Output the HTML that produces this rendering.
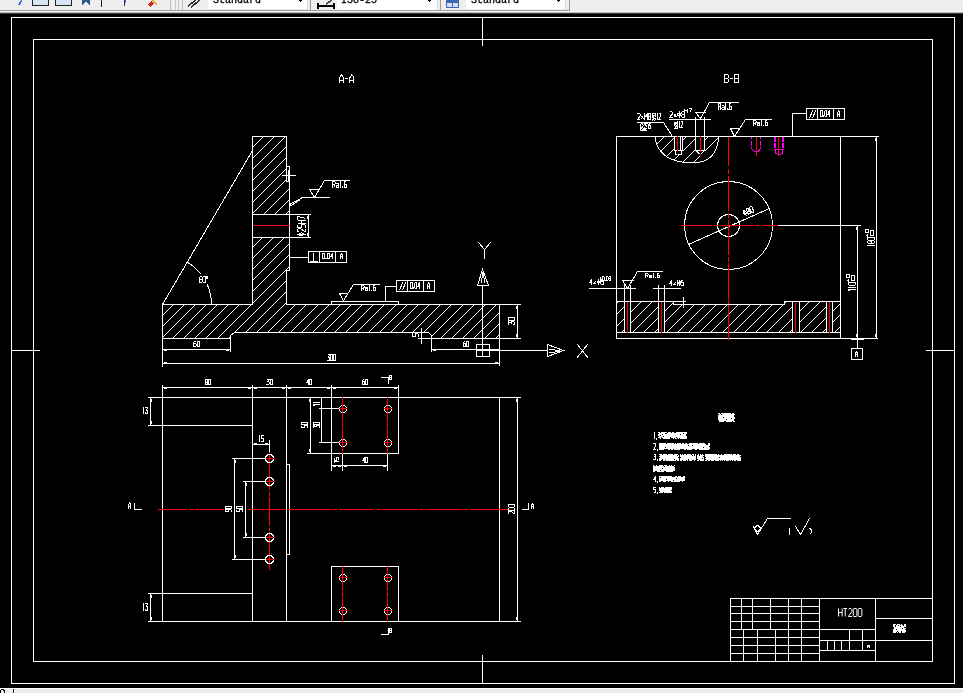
<!DOCTYPE html>
<html><head><meta charset="utf-8"><style>
html,body{margin:0;padding:0;background:#000;overflow:hidden;width:963px;height:693px}
svg{display:block} text{will-change:transform} path,circle{shape-rendering:crispEdges}
</style></head><body>
<svg width="963" height="693" viewBox="0 0 963 693">
<defs><clipPath id="h1"><path d="M252 136 L286 136 L286 181 L289 181 L289 270 L286 270 L286 304 L499 304 L499 338 L431 338 L431 335 L428 332 L234 332 L230 335 L230 338 L162 338 L162 304 L252 304 Z M252 214 L289 214 L289 237 L252 237 Z" clip-rule="evenodd"/></clipPath><clipPath id="h2"><path d="M616 301 L673 301 L673 304 L784 304 L784 301 L840 301 L840 332 L616 332 Z M624 301 L630 301 L630 332 L624 332 Z M658 301 L664 301 L664 332 L658 332 Z M792 301 L799 301 L799 332 L792 332 Z M826 301 L832 301 L832 332 L826 332 Z" clip-rule="evenodd"/></clipPath><clipPath id="bo"><path d="M655 136.5 C656 150 666 160 682 162 L700 162 C712 160 718 150 718.5 136.5 Z M674 136 L683 136 L683 155 L674 155 Z M695 136 L705 136 L705 155 L695 155 Z" clip-rule="evenodd"/></clipPath></defs>
<rect x="0" y="0" width="963" height="11" fill="#eeeeee"/><rect x="0" y="10" width="570" height="1" fill="#9c9c9c"/><rect x="0" y="11" width="963" height="1" fill="#f7f7f7"/><rect x="0" y="12" width="963" height="1" fill="#b4b4b4"/><rect x="0" y="13" width="963" height="1" fill="#3c3c3c"/><path d="M18.50 5.50 L21.50 0.50" fill="none" stroke="#2a6fd6" stroke-width="1.4" /><rect x="32" y="0" width="17" height="6" fill="#222"/><rect x="33" y="0" width="15" height="5" fill="#d8e4f2"/><rect x="55" y="0" width="17" height="6" fill="#222"/><rect x="56" y="0" width="15" height="5" fill="#d8e4f2"/><path d="M82 0 L82 5 L86 2 L90 5 L90 0 Z" fill="#2d5a8a" stroke="none" stroke-width="1" /><rect x="101" y="0" width="1" height="7" fill="#222"/><rect x="124" y="0" width="1" height="6" fill="#333"/><rect x="125" y="0" width="1" height="3" fill="#3a7ad8"/><path d="M148 5 L151 1 L154 3 L151 7 Z" fill="#d22" stroke="none" stroke-width="1" /><path d="M152 0 L157 4" fill="none" stroke="#e9a600" stroke-width="1.5" /><rect x="170" y="0" width="1" height="10" fill="#bdbdbd"/><rect x="175" y="0" width="1" height="10" fill="#c8c8c8"/><rect x="178" y="0" width="1" height="10" fill="#c8c8c8"/><rect x="182" y="0" width="1" height="10" fill="#bdbdbd"/><path d="M188 6 L196 0 M191 7 L200 0" fill="none" stroke="#333" stroke-width="1.6" /><rect x="208" y="0" width="100" height="10" fill="#ffffff"/><rect x="307" y="0" width="1" height="10" fill="#d6dbe6"/><rect x="208" y="9" width="100" height="1" fill="#dfe3ea"/><text x="213" y="2.5" font-family="Liberation Mono" font-size="10" fill="#000" stroke="#000" stroke-width="0.3" text-anchor="start" font-weight="normal">Standard</text><path d="M297 -1 L303 -1 L300 2 Z" fill="#000" stroke="none" stroke-width="1" /><rect x="310" y="0" width="1" height="10" fill="#9a9a9a"/><path d="M318 6 L334 6 M318 3 L318 9 M334 3 L334 9" fill="none" stroke="#000" stroke-width="1.3" /><path d="M326 4 L332 0" fill="none" stroke="#444" stroke-width="1.5" /><rect x="337" y="0" width="101" height="10" fill="#ffffff"/><rect x="437" y="0" width="1" height="10" fill="#d6dbe6"/><text x="341" y="2.5" font-family="Liberation Mono" font-size="10" fill="#000" stroke="#000" stroke-width="0.3" text-anchor="start" font-weight="normal">ISO-25</text><path d="M426 -1 L432 -1 L429 2 Z" fill="#000" stroke="none" stroke-width="1" /><rect x="440" y="0" width="1" height="10" fill="#9a9a9a"/><rect x="446" y="0" width="13" height="8" fill="#3b67b0"/><rect x="447" y="3" width="5" height="4" fill="#cfe0f5"/><rect x="453" y="3" width="5" height="4" fill="#cfe0f5"/><rect x="466" y="0" width="100" height="9" fill="#ffffff"/><rect x="565" y="0" width="1" height="10" fill="#d6dbe6"/><rect x="569" y="0" width="1" height="11" fill="#9c9c9c"/><text x="471" y="2.5" font-family="Liberation Mono" font-size="10" fill="#000" stroke="#000" stroke-width="0.3" text-anchor="start" font-weight="normal">Standard</text><path d="M555 -1 L561 -1 L558 2 Z" fill="#000" stroke="none" stroke-width="1" /><rect x="0" y="14" width="963" height="674" fill="#000000"/><rect x="11" y="17" width="944" height="1" fill="#ffffff"/><rect x="11" y="683" width="944" height="1" fill="#ffffff"/><rect x="11" y="17" width="1" height="667" fill="#ffffff"/><rect x="954" y="17" width="1" height="667" fill="#ffffff"/><rect x="33" y="39" width="900" height="1" fill="#ffffff"/><rect x="33" y="661" width="900" height="1" fill="#ffffff"/><rect x="33" y="39" width="1" height="623" fill="#ffffff"/><rect x="932" y="39" width="1" height="623" fill="#ffffff"/><rect x="482" y="17" width="1" height="29" fill="#ffffff"/><rect x="482" y="655" width="1" height="29" fill="#ffffff"/><rect x="11" y="350" width="29" height="1" fill="#ffffff"/><rect x="926" y="350" width="29" height="1" fill="#ffffff"/><rect x="0" y="688" width="963" height="5" fill="#ececec"/><rect x="0" y="688" width="963" height="1" fill="#ffffff"/><g fill="none" stroke="#000" stroke-width="1.0" stroke-linejoin="round"><g style="vector-effect:non-scaling-stroke"><path vector-effect="non-scaling-stroke" transform="translate(0.00 689.80) scale(1.080 0.900)" d="M1 0 L3 0 L4 1 L4 3 L3 4 L1 4 L0 5 L0 7 L1 8 L3 8 L4 7 L4 5 L3 4 L1 4 L0 3 L0 1 Z"/></g></g><rect x="13" y="689" width="1" height="4" fill="#222"/><g fill="none" stroke="#ffffff" stroke-width="1" stroke-linejoin="round" transform="translate(339.5 74.5)"><path vector-effect="non-scaling-stroke" transform="translate(0.00 0) scale(0.966 1.000)" d="M0 8 L0 3 L2 0 L4 3 L4 8 M0 5.5 L4 5.5"/><path vector-effect="non-scaling-stroke" transform="translate(5.22 0) scale(0.966 1.000)" d="M0.3 4 L3.7 4"/><path vector-effect="non-scaling-stroke" transform="translate(10.44 0) scale(0.966 1.000)" d="M0 8 L0 3 L2 0 L4 3 L4 8 M0 5.5 L4 5.5"/></g><path clip-path="url(#h1)" d="M-52.00 340.00 L154.00 134.00 M-41.00 340.00 L165.00 134.00 M-30.00 340.00 L176.00 134.00 M-18.00 340.00 L188.00 134.00 M-7.00 340.00 L199.00 134.00 M4.00 340.00 L210.00 134.00 M15.00 340.00 L221.00 134.00 M26.00 340.00 L232.00 134.00 M37.00 340.00 L243.00 134.00 M48.00 340.00 L254.00 134.00 M60.00 340.00 L266.00 134.00 M71.00 340.00 L277.00 134.00 M82.00 340.00 L288.00 134.00 M93.00 340.00 L299.00 134.00 M104.00 340.00 L310.00 134.00 M115.00 340.00 L321.00 134.00 M126.00 340.00 L332.00 134.00 M138.00 340.00 L344.00 134.00 M149.00 340.00 L355.00 134.00 M160.00 340.00 L366.00 134.00 M171.00 340.00 L377.00 134.00 M182.00 340.00 L388.00 134.00 M193.00 340.00 L399.00 134.00 M204.00 340.00 L410.00 134.00 M216.00 340.00 L422.00 134.00 M227.00 340.00 L433.00 134.00 M238.00 340.00 L444.00 134.00 M249.00 340.00 L455.00 134.00 M260.00 340.00 L466.00 134.00 M271.00 340.00 L477.00 134.00 M283.00 340.00 L489.00 134.00 M294.00 340.00 L500.00 134.00 M305.00 340.00 L511.00 134.00 M316.00 340.00 L522.00 134.00 M327.00 340.00 L533.00 134.00 M338.00 340.00 L544.00 134.00 M349.00 340.00 L555.00 134.00 M361.00 340.00 L567.00 134.00 M372.00 340.00 L578.00 134.00 M383.00 340.00 L589.00 134.00 M394.00 340.00 L600.00 134.00 M405.00 340.00 L611.00 134.00 M416.00 340.00 L622.00 134.00 M428.00 340.00 L634.00 134.00 M439.00 340.00 L645.00 134.00 M450.00 340.00 L656.00 134.00 M461.00 340.00 L667.00 134.00 M472.00 340.00 L678.00 134.00 M483.00 340.00 L689.00 134.00 M494.00 340.00 L700.00 134.00 M506.00 340.00 L712.00 134.00" stroke="#ffffff" stroke-width="1" fill="none"/><rect x="252" y="136" width="1" height="169" fill="#ffffff"/><rect x="252" y="136" width="35" height="1" fill="#ffffff"/><rect x="286" y="136" width="1" height="46" fill="#ffffff"/><rect x="286" y="181" width="4" height="1" fill="#ffffff"/><rect x="289" y="181" width="1" height="90" fill="#ffffff"/><rect x="286" y="270" width="4" height="1" fill="#ffffff"/><rect x="286" y="270" width="1" height="35" fill="#ffffff"/><rect x="162" y="304" width="91" height="1" fill="#ffffff"/><rect x="286" y="304" width="214" height="1" fill="#ffffff"/><rect x="162" y="304" width="1" height="63" fill="#ffffff"/><rect x="499" y="304" width="1" height="62" fill="#ffffff"/><rect x="162" y="338" width="69" height="1" fill="#ffffff"/><rect x="230" y="335" width="1" height="17" fill="#ffffff"/><path d="M230.50 335.50 L234.50 332.50" fill="none" stroke="#ffffff" stroke-width="1" /><rect x="234" y="332" width="195" height="1" fill="#ffffff"/><path d="M428.50 332.50 L431.50 335.50" fill="none" stroke="#ffffff" stroke-width="1" /><rect x="431" y="335" width="1" height="17" fill="#ffffff"/><rect x="418" y="338" width="103" height="1" fill="#ffffff"/><rect x="286" y="166" width="4" height="1" fill="#ffffff"/><rect x="286" y="181" width="4" height="1" fill="#ffffff"/><rect x="286" y="166" width="1" height="16" fill="#ffffff"/><rect x="289" y="166" width="1" height="16" fill="#ffffff"/><rect x="282" y="175" width="14" height="1" fill="#ffffff"/><rect x="288" y="170" width="1" height="12" fill="#ffffff"/><rect x="253" y="215" width="36" height="22" fill="#000"/><rect x="252" y="214" width="59" height="1" fill="#ffffff"/><rect x="252" y="237" width="59" height="1" fill="#ffffff"/><rect x="253" y="225" width="37" height="1" fill="#ff0000"/><rect x="308" y="214" width="1" height="24" fill="#ffffff"/><g fill="none" stroke="#ffffff" stroke-width="1" stroke-linejoin="round" transform="translate(305.5 235.8) rotate(-90) translate(0 -8)"><path vector-effect="non-scaling-stroke" transform="translate(0.00 0) scale(0.754 1.000)" d="M2 -0.5 L2 8.5 M2 2 L3.5 2.5 L4 4 L3.5 5.5 L2 6 L0.5 5.5 L0 4 L0.5 2.5 Z"/><path vector-effect="non-scaling-stroke" transform="translate(4.07 0) scale(0.754 1.000)" d="M0 1 L1 0 L3 0 L4 1 L4 3 L0 8 L4 8"/><path vector-effect="non-scaling-stroke" transform="translate(8.14 0) scale(0.754 1.000)" d="M4 0 L0.3 0 L0 3.6 L3 3.6 L4 4.6 L4 7 L3 8 L0 8"/><path vector-effect="non-scaling-stroke" transform="translate(12.21 0) scale(0.754 1.000)" d="M0 0 L0 8 M4 0 L4 8 M0 4 L4 4"/><path vector-effect="non-scaling-stroke" transform="translate(16.28 0) scale(0.754 1.000)" d="M0 0 L4 0 L1.5 8"/></g><path d="M252.50 150.50 L162.50 304.50" fill="none" stroke="#ffffff" stroke-width="1" /><path d="M186.99 262.06 A49 49 0 0 1 201.11 274.33" fill="none" stroke="#ffffff" stroke-width="1" /><path d="M207.26 284.57 A49 49 0 0 1 211.5 304.5" fill="none" stroke="#ffffff" stroke-width="1" /><g fill="none" stroke="#ffffff" stroke-width="1" stroke-linejoin="round" transform="translate(199.5 276.5)"><path vector-effect="non-scaling-stroke" transform="translate(0.00 0) scale(0.629 0.750)" d="M3.5 0 L1.2 0 L0 1.5 L0 7 L1 8 L3 8 L4 7 L4 4.6 L3 3.6 L0 3.6"/><path vector-effect="non-scaling-stroke" transform="translate(3.40 0) scale(0.629 0.750)" d="M0.6 0 L3.4 0 L4 1 L4 7 L3.4 8 L0.6 8 L0 7 L0 1 Z"/><path vector-effect="non-scaling-stroke" transform="translate(6.29 0) scale(0.629 0.750)" d="M1 0 L3 0 L3 2 L1 2 Z"/></g><path d="M309.50 189.50 L319.50 189.50" fill="none" stroke="#ffffff" stroke-width="1" /><path d="M309.50 189.50 L314.50 197.50 L324.50 180.50 L349.50 180.50" fill="none" stroke="#ffffff" stroke-width="1" /><rect x="302" y="197" width="28" height="1" fill="#ffffff"/><path d="M302.50 197.50 L289.50 204.50" fill="none" stroke="#ffffff" stroke-width="1" /><path d="M300.50 199.50 L289.50 206.50" fill="none" stroke="#ffffff" stroke-width="1" /><g fill="none" stroke="#ffffff" stroke-width="1" stroke-linejoin="round" transform="translate(332.5 181.5)"><path vector-effect="non-scaling-stroke" transform="translate(0.00 0) scale(0.662 0.750)" d="M0 8 L0 0 L3 0 L4 1 L4 3 L3 4 L0 4 M2 4 L4 8"/><path vector-effect="non-scaling-stroke" transform="translate(3.58 0) scale(0.662 0.750)" d="M0.5 3 L3 3 L4 4 L4 8 L1 8 L0 7 L0 6 L1 5 L4 5"/><path vector-effect="non-scaling-stroke" transform="translate(6.62 0) scale(0.662 0.750)" d="M1 1.2 L2 0 L2 8"/><path vector-effect="non-scaling-stroke" transform="translate(8.87 0) scale(0.662 0.750)" d="M1.6 7.2 L2.2 7.2 L2.2 8 L1.6 8 Z"/><path vector-effect="non-scaling-stroke" transform="translate(11.65 0) scale(0.662 0.750)" d="M3.5 0 L1.2 0 L0 1.5 L0 7 L1 8 L3 8 L4 7 L4 4.6 L3 3.6 L0 3.6"/></g><rect x="289" y="257" width="20" height="1" fill="#ffffff"/><rect x="308" y="251" width="39" height="1" fill="#ffffff"/><rect x="308" y="262" width="39" height="1" fill="#ffffff"/><rect x="308" y="251" width="1" height="12" fill="#ffffff"/><rect x="346" y="251" width="1" height="12" fill="#ffffff"/><rect x="319" y="251" width="1" height="12" fill="#ffffff"/><rect x="335" y="251" width="1" height="12" fill="#ffffff"/><rect x="313" y="253" width="1" height="9" fill="#ffffff"/><rect x="310" y="261" width="8" height="1" fill="#ffffff"/><g fill="none" stroke="#ffffff" stroke-width="1" stroke-linejoin="round" transform="translate(322.5 253.5)"><path vector-effect="non-scaling-stroke" transform="translate(0.00 0) scale(0.579 0.625)" d="M0.6 0 L3.4 0 L4 1 L4 7 L3.4 8 L0.6 8 L0 7 L0 1 Z"/><path vector-effect="non-scaling-stroke" transform="translate(2.43 0) scale(0.579 0.625)" d="M1.6 7.2 L2.2 7.2 L2.2 8 L1.6 8 Z"/><path vector-effect="non-scaling-stroke" transform="translate(4.86 0) scale(0.579 0.625)" d="M0.6 0 L3.4 0 L4 1 L4 7 L3.4 8 L0.6 8 L0 7 L0 1 Z"/><path vector-effect="non-scaling-stroke" transform="translate(7.99 0) scale(0.579 0.625)" d="M3 8 L3 0 L0 5.5 L4 5.5"/></g><g fill="none" stroke="#ffffff" stroke-width="1" stroke-linejoin="round" transform="translate(340.5 253.5)"><path vector-effect="non-scaling-stroke" transform="translate(0.00 0) scale(0.575 0.625)" d="M0 8 L0 3 L2 0 L4 3 L4 8 M0 5.5 L4 5.5"/></g><rect x="331" y="301" width="68" height="1" fill="#ffffff"/><rect x="331" y="301" width="1" height="4" fill="#ffffff"/><rect x="398" y="301" width="1" height="4" fill="#ffffff"/><path d="M339.50 293.50 L347.50 293.50" fill="none" stroke="#ffffff" stroke-width="1" /><path d="M339.50 293.50 L343.50 300.50 L353.50 284.50 L379.50 284.50" fill="none" stroke="#ffffff" stroke-width="1" /><g fill="none" stroke="#ffffff" stroke-width="1" stroke-linejoin="round" transform="translate(361.5 285.5)"><path vector-effect="non-scaling-stroke" transform="translate(0.00 0) scale(0.662 0.625)" d="M0 8 L0 0 L3 0 L4 1 L4 3 L3 4 L0 4 M2 4 L4 8"/><path vector-effect="non-scaling-stroke" transform="translate(3.58 0) scale(0.662 0.625)" d="M0.5 3 L3 3 L4 4 L4 8 L1 8 L0 7 L0 6 L1 5 L4 5"/><path vector-effect="non-scaling-stroke" transform="translate(6.62 0) scale(0.662 0.625)" d="M1 1.2 L2 0 L2 8"/><path vector-effect="non-scaling-stroke" transform="translate(8.87 0) scale(0.662 0.625)" d="M1.6 7.2 L2.2 7.2 L2.2 8 L1.6 8 Z"/><path vector-effect="non-scaling-stroke" transform="translate(11.65 0) scale(0.662 0.625)" d="M3.5 0 L1.2 0 L0 1.5 L0 7 L1 8 L3 8 L4 7 L4 4.6 L3 3.6 L0 3.6"/></g><rect x="396" y="280" width="39" height="1" fill="#ffffff"/><rect x="396" y="291" width="39" height="1" fill="#ffffff"/><rect x="396" y="280" width="1" height="12" fill="#ffffff"/><rect x="434" y="280" width="1" height="12" fill="#ffffff"/><rect x="407" y="280" width="1" height="12" fill="#ffffff"/><rect x="423" y="280" width="1" height="12" fill="#ffffff"/><path d="M399.50 290.50 L402.50 282.50" fill="none" stroke="#ffffff" stroke-width="1" /><path d="M402.50 290.50 L405.50 282.50" fill="none" stroke="#ffffff" stroke-width="1" /><g fill="none" stroke="#ffffff" stroke-width="1" stroke-linejoin="round" transform="translate(410.5 282.5)"><path vector-effect="non-scaling-stroke" transform="translate(0.00 0) scale(0.522 0.750)" d="M0.6 0 L3.4 0 L4 1 L4 7 L3.4 8 L0.6 8 L0 7 L0 1 Z"/><path vector-effect="non-scaling-stroke" transform="translate(2.19 0) scale(0.522 0.750)" d="M1.6 7.2 L2.2 7.2 L2.2 8 L1.6 8 Z"/><path vector-effect="non-scaling-stroke" transform="translate(4.39 0) scale(0.522 0.750)" d="M0.6 0 L3.4 0 L4 1 L4 7 L3.4 8 L0.6 8 L0 7 L0 1 Z"/><path vector-effect="non-scaling-stroke" transform="translate(7.21 0) scale(0.522 0.750)" d="M3 8 L3 0 L0 5.5 L4 5.5"/></g><g fill="none" stroke="#ffffff" stroke-width="1" stroke-linejoin="round" transform="translate(427.5 282.5)"><path vector-effect="non-scaling-stroke" transform="translate(0.00 0) scale(0.575 0.750)" d="M0 8 L0 3 L2 0 L4 3 L4 8 M0 5.5 L4 5.5"/></g><rect x="385" y="286" width="12" height="1" fill="#ffffff"/><rect x="385" y="286" width="1" height="15" fill="#ffffff"/><rect x="421" y="328" width="1" height="16" fill="#ffffff"/><g fill="none" stroke="#ffffff" stroke-width="1" stroke-linejoin="round" transform="translate(418.5 336.8) rotate(-90) translate(0 -6)"><path vector-effect="non-scaling-stroke" transform="translate(0.00 0) scale(0.825 0.750)" d="M4 0 L0.3 0 L0 3.6 L3 3.6 L4 4.6 L4 7 L3 8 L0 8"/></g><rect x="162" y="349" width="69" height="1" fill="#ffffff"/><rect x="431" y="349" width="69" height="1" fill="#ffffff"/><rect x="162" y="363" width="338" height="1" fill="#ffffff"/><g fill="none" stroke="#ffffff" stroke-width="1" stroke-linejoin="round" transform="translate(193.5 341.5)"><path vector-effect="non-scaling-stroke" transform="translate(0.00 0) scale(0.670 0.625)" d="M3.5 0 L1.2 0 L0 1.5 L0 7 L1 8 L3 8 L4 7 L4 4.6 L3 3.6 L0 3.6"/><path vector-effect="non-scaling-stroke" transform="translate(3.62 0) scale(0.670 0.625)" d="M0.6 0 L3.4 0 L4 1 L4 7 L3.4 8 L0.6 8 L0 7 L0 1 Z"/></g><g fill="none" stroke="#ffffff" stroke-width="1" stroke-linejoin="round" transform="translate(463.5 341.5)"><path vector-effect="non-scaling-stroke" transform="translate(0.00 0) scale(0.564 0.625)" d="M3.5 0 L1.2 0 L0 1.5 L0 7 L1 8 L3 8 L4 7 L4 4.6 L3 3.6 L0 3.6"/><path vector-effect="non-scaling-stroke" transform="translate(3.04 0) scale(0.564 0.625)" d="M0.6 0 L3.4 0 L4 1 L4 7 L3.4 8 L0.6 8 L0 7 L0 1 Z"/></g><g fill="none" stroke="#ffffff" stroke-width="1" stroke-linejoin="round" transform="translate(327.5 354.5)"><path vector-effect="non-scaling-stroke" transform="translate(0.00 0) scale(0.561 0.750)" d="M0 0 L4 0 L2 3.5 L3 3.5 L4 4.5 L4 7 L3 8 L1 8 L0 7"/><path vector-effect="non-scaling-stroke" transform="translate(3.03 0) scale(0.561 0.750)" d="M0.6 0 L3.4 0 L4 1 L4 7 L3.4 8 L0.6 8 L0 7 L0 1 Z"/><path vector-effect="non-scaling-stroke" transform="translate(6.06 0) scale(0.561 0.750)" d="M0.6 0 L3.4 0 L4 1 L4 7 L3.4 8 L0.6 8 L0 7 L0 1 Z"/></g><rect x="517" y="304" width="1" height="35" fill="#ffffff"/><rect x="499" y="304" width="22" height="1" fill="#ffffff"/><g fill="none" stroke="#ffffff" stroke-width="1" stroke-linejoin="round" transform="translate(514.5 324.8) rotate(-90) translate(0 -6)"><path vector-effect="non-scaling-stroke" transform="translate(0.00 0) scale(0.777 0.750)" d="M0 0 L4 0 L2 3.5 L3 3.5 L4 4.5 L4 7 L3 8 L1 8 L0 7"/><path vector-effect="non-scaling-stroke" transform="translate(4.19 0) scale(0.777 0.750)" d="M0.6 0 L3.4 0 L4 1 L4 7 L3.4 8 L0.6 8 L0 7 L0 1 Z"/></g><rect x="482" y="285" width="1" height="66" fill="#ffffff"/><path d="M477.5 285.5 L482.5 269.5 L488.5 285.5 Z" fill="none" stroke="#ffffff" stroke-width="1" /><path d="M481.50 283.50 L482.50 272.50" fill="none" stroke="#ffffff" stroke-width="1" /><path d="M484.50 283.50 L483.50 272.50" fill="none" stroke="#ffffff" stroke-width="1" /><path d="M478.50 242.50 L484.50 249.50" fill="none" stroke="#ffffff" stroke-width="1" /><path d="M490.50 242.50 L484.50 249.50" fill="none" stroke="#ffffff" stroke-width="1" /><rect x="484" y="249" width="1" height="10" fill="#ffffff"/><rect x="482" y="350" width="66" height="1" fill="#ffffff"/><path d="M547.5 344.5 L563.5 350.5 L547.5 356.5 Z" fill="none" stroke="#ffffff" stroke-width="1" /><path d="M549.50 349.50 L560.50 350.50" fill="none" stroke="#ffffff" stroke-width="1" /><path d="M549.50 352.50 L560.50 351.50" fill="none" stroke="#ffffff" stroke-width="1" /><path d="M577.50 344.50 L588.50 358.50" fill="none" stroke="#ffffff" stroke-width="1" /><path d="M587.50 344.50 L576.50 358.50" fill="none" stroke="#ffffff" stroke-width="1" /><rect x="476" y="344" width="14" height="1" fill="#ffffff"/><rect x="476" y="356" width="14" height="1" fill="#ffffff"/><rect x="476" y="344" width="1" height="13" fill="#ffffff"/><rect x="489" y="344" width="1" height="13" fill="#ffffff"/><rect x="482" y="344" width="1" height="13" fill="#ffffff"/><rect x="476" y="350" width="14" height="1" fill="#ffffff"/><g fill="none" stroke="#ffffff" stroke-width="1" stroke-linejoin="round" transform="translate(724.5 74.5)"><path vector-effect="non-scaling-stroke" transform="translate(0.00 0) scale(0.966 1.000)" d="M-0.6 8 L3.2 8 L4 7 L4 5.2 L3.2 4.2 L4 3.2 L4 1 L3.2 0 L0 0 L0 8 M0 4.2 L3.2 4.2"/><path vector-effect="non-scaling-stroke" transform="translate(5.22 0) scale(0.966 1.000)" d="M0.3 4 L3.7 4"/><path vector-effect="non-scaling-stroke" transform="translate(10.44 0) scale(0.966 1.000)" d="M-0.6 8 L3.2 8 L4 7 L4 5.2 L3.2 4.2 L4 3.2 L4 1 L3.2 0 L0 0 L0 8 M0 4.2 L3.2 4.2"/></g><path clip-path="url(#h2)" d="M575.00 334.00 L610.00 299.00 M586.00 334.00 L621.00 299.00 M597.00 334.00 L632.00 299.00 M609.00 334.00 L644.00 299.00 M620.00 334.00 L655.00 299.00 M631.00 334.00 L666.00 299.00 M642.00 334.00 L677.00 299.00 M653.00 334.00 L688.00 299.00 M665.00 334.00 L700.00 299.00 M676.00 334.00 L711.00 299.00 M687.00 334.00 L722.00 299.00 M698.00 334.00 L733.00 299.00 M709.00 334.00 L744.00 299.00 M721.00 334.00 L756.00 299.00 M732.00 334.00 L767.00 299.00 M743.00 334.00 L778.00 299.00 M754.00 334.00 L789.00 299.00 M765.00 334.00 L800.00 299.00 M777.00 334.00 L812.00 299.00 M788.00 334.00 L823.00 299.00 M799.00 334.00 L834.00 299.00 M810.00 334.00 L845.00 299.00 M821.00 334.00 L856.00 299.00 M833.00 334.00 L868.00 299.00 M844.00 334.00 L879.00 299.00" stroke="#ffffff" stroke-width="1" fill="none"/><rect x="616" y="136" width="263" height="1" fill="#ffffff"/><rect x="616" y="136" width="1" height="203" fill="#ffffff"/><rect x="840" y="136" width="1" height="203" fill="#ffffff"/><rect x="616" y="338" width="262" height="1" fill="#ffffff"/><rect x="616" y="301" width="70" height="1" fill="#ffffff"/><rect x="673" y="301" width="1" height="4" fill="#ffffff"/><rect x="683" y="297" width="1" height="11" fill="#ffffff"/><rect x="673" y="304" width="112" height="1" fill="#ffffff"/><rect x="784" y="301" width="1" height="4" fill="#ffffff"/><rect x="784" y="301" width="57" height="1" fill="#ffffff"/><rect x="616" y="332" width="225" height="1" fill="#ffffff"/><rect x="624" y="301" width="1" height="32" fill="#ffffff"/><rect x="630" y="301" width="1" height="32" fill="#ffffff"/><rect x="658" y="301" width="1" height="32" fill="#ffffff"/><rect x="664" y="301" width="1" height="32" fill="#ffffff"/><rect x="792" y="301" width="1" height="32" fill="#ffffff"/><rect x="799" y="301" width="1" height="32" fill="#ffffff"/><rect x="826" y="301" width="1" height="32" fill="#ffffff"/><rect x="832" y="301" width="1" height="32" fill="#ffffff"/><rect x="627" y="302" width="1" height="31" fill="#ff0000"/><rect x="661" y="302" width="1" height="31" fill="#ff0000"/><rect x="795" y="302" width="1" height="31" fill="#ff0000"/><rect x="829" y="302" width="1" height="31" fill="#ff0000"/><path clip-path="url(#bo)" d="M587 170 L627 130 M598 170 L638 130 M609 170 L649 130 M620 170 L660 130 M631 170 L671 130 M642 170 L682 130 M653 170 L693 130 M664 170 L704 130 M675 170 L715 130 M686 170 L726 130 M697 170 L737 130" stroke="#fff" fill="none"/><path d="M655 136.5 C656 150 666 160 682 162 L700 162 C712 160 718 150 718.5 136.5" fill="none" stroke="#ffffff" stroke-width="1" /><rect x="674" y="136" width="1" height="15" fill="#ffffff"/><rect x="682" y="136" width="1" height="15" fill="#ffffff"/><rect x="680" y="136" width="1" height="15" fill="#ffffff"/><rect x="674" y="150" width="9" height="1" fill="#ffffff"/><rect x="675" y="150" width="1" height="5" fill="#ffffff"/><rect x="681" y="150" width="1" height="5" fill="#ffffff"/><rect x="675" y="154" width="7" height="1" fill="#ffffff"/><rect x="677" y="136" width="1" height="15" fill="#ff0000"/><rect x="677" y="154" width="1" height="1" fill="#ff0000"/><rect x="695" y="117" width="1" height="34" fill="#ffffff"/><rect x="704" y="117" width="1" height="34" fill="#ffffff"/><rect x="695" y="150" width="10" height="1" fill="#ffffff"/><path d="M695.50 150.50 L700.50 154.50 L704.50 150.50" fill="none" stroke="#ffffff" stroke-width="1" /><rect x="700" y="136" width="1" height="16" fill="#ff0000"/><rect x="700" y="154" width="1" height="2" fill="#ff0000"/><rect x="637" y="122" width="27" height="1" fill="#ffffff"/><path d="M663.50 122.50 L672.50 136.50" fill="none" stroke="#ffffff" stroke-width="1" /><g fill="none" stroke="#ffffff" stroke-width="1" stroke-linejoin="round" transform="translate(637.5 113.5)"><path vector-effect="non-scaling-stroke" transform="translate(0.00 0) scale(0.658 0.750)" d="M0 1 L1 0 L3 0 L4 1 L4 3 L0 8 L4 8"/><path vector-effect="non-scaling-stroke" transform="translate(3.56 0) scale(0.658 0.750)" d="M0.5 3 L3.5 7 M3.5 3 L0.5 7"/><path vector-effect="non-scaling-stroke" transform="translate(7.11 0) scale(0.658 0.750)" d="M0 8 L0 0 L2 5 L4 0 L4 8"/><path vector-effect="non-scaling-stroke" transform="translate(10.67 0) scale(0.658 0.750)" d="M1 0 L3 0 L4 1 L4 3 L3 4 L1 4 L0 5 L0 7 L1 8 L3 8 L4 7 L4 5 L3 4 L1 4 L0 3 L0 1 Z"/></g><path d="M652 113.5h4M652 114.5h1M655 114.5h1M652 115.5h4M652 116.5h2M655 116.5h1M652 117.5h2M653 118.5h3M652 119.5h2M655 119.5h1M652 120.5h1M654 120.5h1" stroke="#fff" stroke-width="1" fill="none"/><g fill="none" stroke="#ffffff" stroke-width="1" stroke-linejoin="round" transform="translate(656.5 113.5)"><path vector-effect="non-scaling-stroke" transform="translate(-0.44 0) scale(0.551 0.750)" d="M1 1.2 L2 0 L2 8"/><path vector-effect="non-scaling-stroke" transform="translate(2.09 0) scale(0.551 0.750)" d="M0 1 L1 0 L3 0 L4 1 L4 3 L0 8 L4 8"/></g><path d="M641 123.5h2M644 123.5h3M640 124.5h1M642 124.5h1M644 124.5h2M640 125.5h1M643 125.5h1M645 125.5h2M640 126.5h1M642 126.5h1M646 126.5h1M640 127.5h3M644 127.5h1M640 128.5h2M643 128.5h4M640 129.5h1M642 129.5h4M640 130.5h7" stroke="#fff" stroke-width="1" fill="none"/><g fill="none" stroke="#ffffff" stroke-width="1" stroke-linejoin="round" transform="translate(647.5 123.5)"><path vector-effect="non-scaling-stroke" transform="translate(-0.34 0) scale(0.423 0.625)" d="M1 1.2 L2 0 L2 8"/><path vector-effect="non-scaling-stroke" transform="translate(1.61 0) scale(0.423 0.625)" d="M4 0 L0.3 0 L0 3.6 L3 3.6 L4 4.6 L4 7 L3 8 L0 8"/></g><rect x="669" y="119" width="42" height="1" fill="#ffffff"/><g fill="none" stroke="#ffffff" stroke-width="1" stroke-linejoin="round" transform="translate(669.5 111.5)"><path vector-effect="non-scaling-stroke" transform="translate(0.00 0) scale(0.757 0.750)" d="M0 1 L1 0 L3 0 L4 1 L4 3 L0 8 L4 8"/><path vector-effect="non-scaling-stroke" transform="translate(4.09 0) scale(0.757 0.750)" d="M0.5 3 L3.5 7 M3.5 3 L0.5 7"/><path vector-effect="non-scaling-stroke" transform="translate(8.18 0) scale(0.757 0.750)" d="M2 -0.5 L2 8.5 M2 2 L3.5 2.5 L4 4 L3.5 5.5 L2 6 L0.5 5.5 L0 4 L0.5 2.5 Z"/><path vector-effect="non-scaling-stroke" transform="translate(12.27 0) scale(0.757 0.750)" d="M1 0 L3 0 L4 1 L4 3 L3 4 L1 4 L0 5 L0 7 L1 8 L3 8 L4 7 L4 5 L3 4 L1 4 L0 3 L0 1 Z"/></g><g fill="none" stroke="#ffffff" stroke-width="1" stroke-linejoin="round" transform="translate(684.5 108.5)"><path vector-effect="non-scaling-stroke" transform="translate(0.00 0) scale(0.777 0.500)" d="M0 0 L0 8 M4 0 L4 8 M0 4 L4 4"/><path vector-effect="non-scaling-stroke" transform="translate(4.19 0) scale(0.777 0.500)" d="M0 0 L4 0 L1.5 8"/></g><path d="M677 121.5h1M674 122.5h4M674 123.5h4M674 124.5h2M677 124.5h1M674 125.5h1M676 125.5h2M675 126.5h3M675 127.5h1M677 127.5h1M674 128.5h4" stroke="#fff" stroke-width="1" fill="none"/><g fill="none" stroke="#ffffff" stroke-width="1" stroke-linejoin="round" transform="translate(678.5 121.5)"><path vector-effect="non-scaling-stroke" transform="translate(-0.44 0) scale(0.551 0.750)" d="M1 1.2 L2 0 L2 8"/><path vector-effect="non-scaling-stroke" transform="translate(2.09 0) scale(0.551 0.750)" d="M0 1 L1 0 L3 0 L4 1 L4 3 L0 8 L4 8"/></g><path d="M695.50 112.50 L705.50 112.50" fill="none" stroke="#ffffff" stroke-width="1" /><path d="M695.50 112.50 L700.50 118.50 L709.50 102.50 L738.50 102.50" fill="none" stroke="#ffffff" stroke-width="1" /><g fill="none" stroke="#ffffff" stroke-width="1" stroke-linejoin="round" transform="translate(718.5 103.5)"><path vector-effect="non-scaling-stroke" transform="translate(0.00 0) scale(0.616 0.750)" d="M0 8 L0 0 L3 0 L4 1 L4 3 L3 4 L0 4 M2 4 L4 8"/><path vector-effect="non-scaling-stroke" transform="translate(3.32 0) scale(0.616 0.750)" d="M0.5 3 L3 3 L4 4 L4 8 L1 8 L0 7 L0 6 L1 5 L4 5"/><path vector-effect="non-scaling-stroke" transform="translate(6.16 0) scale(0.616 0.750)" d="M1 1.2 L2 0 L2 8"/><path vector-effect="non-scaling-stroke" transform="translate(8.25 0) scale(0.616 0.750)" d="M1.6 7.2 L2.2 7.2 L2.2 8 L1.6 8 Z"/><path vector-effect="non-scaling-stroke" transform="translate(10.84 0) scale(0.616 0.750)" d="M3.5 0 L1.2 0 L0 1.5 L0 7 L1 8 L3 8 L4 7 L4 4.6 L3 3.6 L0 3.6"/></g><path d="M730.50 128.50 L739.50 128.50" fill="none" stroke="#ffffff" stroke-width="1" /><path d="M730.50 128.50 L734.50 136.50 L745.50 119.50 L771.50 119.50" fill="none" stroke="#ffffff" stroke-width="1" /><g fill="none" stroke="#ffffff" stroke-width="1" stroke-linejoin="round" transform="translate(753.5 120.5)"><path vector-effect="non-scaling-stroke" transform="translate(0.00 0) scale(0.662 0.625)" d="M0 8 L0 0 L3 0 L4 1 L4 3 L3 4 L0 4 M2 4 L4 8"/><path vector-effect="non-scaling-stroke" transform="translate(3.57 0) scale(0.662 0.625)" d="M0.5 3 L3 3 L4 4 L4 8 L1 8 L0 7 L0 6 L1 5 L4 5"/><path vector-effect="non-scaling-stroke" transform="translate(6.62 0) scale(0.662 0.625)" d="M1 1.2 L2 0 L2 8"/><path vector-effect="non-scaling-stroke" transform="translate(8.87 0) scale(0.662 0.625)" d="M1.6 7.2 L2.2 7.2 L2.2 8 L1.6 8 Z"/><path vector-effect="non-scaling-stroke" transform="translate(11.65 0) scale(0.662 0.625)" d="M3.5 0 L1.2 0 L0 1.5 L0 7 L1 8 L3 8 L4 7 L4 4.6 L3 3.6 L0 3.6"/></g><rect x="751" y="137" width="1" height="2" fill="#ff00ff"/><rect x="760" y="137" width="1" height="2" fill="#ff00ff"/><rect x="751" y="141" width="1" height="5" fill="#ff00ff"/><rect x="760" y="141" width="1" height="5" fill="#ff00ff"/><path d="M751.5 147.5 Q752.5 151.5 756.5 151.5 Q760 151.5 760.5 147.5" fill="none" stroke="#ff00ff" stroke-width="1" /><rect x="756" y="137" width="1" height="19" fill="#ff0000"/><rect x="774" y="137" width="2" height="5" fill="#ff00ff"/><rect x="782" y="137" width="2" height="5" fill="#ff00ff"/><rect x="774" y="143" width="2" height="5" fill="#ff00ff"/><rect x="782" y="143" width="2" height="5" fill="#ff00ff"/><rect x="774" y="149" width="10" height="1" fill="#ff00ff"/><rect x="775" y="149" width="1" height="5" fill="#ff00ff"/><rect x="782" y="149" width="1" height="5" fill="#ff00ff"/><path d="M775.5 153 Q778.5 156 782.5 153" fill="none" stroke="#ff00ff" stroke-width="1" /><rect x="778" y="137" width="1" height="19" fill="#ff0000"/><rect x="806" y="108" width="39" height="1" fill="#ffffff"/><rect x="806" y="119" width="39" height="1" fill="#ffffff"/><rect x="806" y="108" width="1" height="12" fill="#ffffff"/><rect x="844" y="108" width="1" height="12" fill="#ffffff"/><rect x="817" y="108" width="1" height="12" fill="#ffffff"/><rect x="833" y="108" width="1" height="12" fill="#ffffff"/><path d="M809.50 118.50 L812.50 110.50" fill="none" stroke="#ffffff" stroke-width="1" /><path d="M812.50 118.50 L815.50 110.50" fill="none" stroke="#ffffff" stroke-width="1" /><g fill="none" stroke="#ffffff" stroke-width="1" stroke-linejoin="round" transform="translate(820.5 110.5)"><path vector-effect="non-scaling-stroke" transform="translate(0.00 0) scale(0.522 0.750)" d="M0.6 0 L3.4 0 L4 1 L4 7 L3.4 8 L0.6 8 L0 7 L0 1 Z"/><path vector-effect="non-scaling-stroke" transform="translate(2.19 0) scale(0.522 0.750)" d="M1.6 7.2 L2.2 7.2 L2.2 8 L1.6 8 Z"/><path vector-effect="non-scaling-stroke" transform="translate(4.39 0) scale(0.522 0.750)" d="M0.6 0 L3.4 0 L4 1 L4 7 L3.4 8 L0.6 8 L0 7 L0 1 Z"/><path vector-effect="non-scaling-stroke" transform="translate(7.21 0) scale(0.522 0.750)" d="M3 8 L3 0 L0 5.5 L4 5.5"/></g><g fill="none" stroke="#ffffff" stroke-width="1" stroke-linejoin="round" transform="translate(837.5 110.5)"><path vector-effect="non-scaling-stroke" transform="translate(0.00 0) scale(0.575 0.750)" d="M0 8 L0 3 L2 0 L4 3 L4 8 M0 5.5 L4 5.5"/></g><rect x="792" y="113" width="15" height="1" fill="#ffffff"/><rect x="792" y="113" width="1" height="24" fill="#ffffff"/><circle cx="728.5" cy="225.5" r="44" fill="none" stroke="#ffffff" stroke-width="1" /><circle cx="728.5" cy="225.5" r="11" fill="none" stroke="#ffffff" stroke-width="1" /><path d="M688.50 244.50 L769.50 208.50" fill="none" stroke="#ffffff" stroke-width="1" /><g fill="none" stroke="#ffffff" stroke-width="1" stroke-linejoin="round" transform="translate(742.5 210.5) rotate(-24.5) "><path vector-effect="non-scaling-stroke" transform="translate(0.00 0) scale(0.676 0.750)" d="M2 -0.5 L2 8.5 M2 2 L3.5 2.5 L4 4 L3.5 5.5 L2 6 L0.5 5.5 L0 4 L0.5 2.5 Z"/><path vector-effect="non-scaling-stroke" transform="translate(3.65 0) scale(0.676 0.750)" d="M1 0 L3 0 L4 1 L4 3 L3 4 L1 4 L0 5 L0 7 L1 8 L3 8 L4 7 L4 5 L3 4 L1 4 L0 3 L0 1 Z"/><path vector-effect="non-scaling-stroke" transform="translate(7.30 0) scale(0.676 0.750)" d="M0.6 0 L3.4 0 L4 1 L4 7 L3.4 8 L0.6 8 L0 7 L0 1 Z"/></g><rect x="728" y="137" width="1" height="29" fill="#ff0000"/><rect x="728" y="169" width="1" height="5" fill="#ff0000"/><rect x="728" y="176" width="1" height="35" fill="#ff0000"/><rect x="728" y="213" width="1" height="5" fill="#ff0000"/><rect x="728" y="220" width="1" height="35" fill="#ff0000"/><rect x="728" y="257" width="1" height="5" fill="#ff0000"/><rect x="728" y="263" width="1" height="37" fill="#ff0000"/><rect x="728" y="301" width="1" height="3" fill="#ff0000"/><rect x="728" y="305" width="1" height="35" fill="#ff0000"/><rect x="681" y="225" width="31" height="1" fill="#ff0000"/><rect x="714" y="225" width="4" height="1" fill="#ff0000"/><rect x="721" y="225" width="33" height="1" fill="#ff0000"/><rect x="755" y="225" width="5" height="1" fill="#ff0000"/><rect x="762" y="225" width="17" height="1" fill="#ff0000"/><rect x="778" y="225" width="83" height="1" fill="#ffffff"/><rect x="876" y="136" width="1" height="203" fill="#ffffff"/><rect x="857" y="225" width="1" height="124" fill="#ffffff"/><g fill="none" stroke="#ffffff" stroke-width="1" stroke-linejoin="round" transform="translate(874.5 245.8) rotate(-90) translate(0 -7)"><path vector-effect="non-scaling-stroke" transform="translate(-0.50 0) scale(0.629 0.875)" d="M1 1.2 L2 0 L2 8"/><path vector-effect="non-scaling-stroke" transform="translate(2.39 0) scale(0.629 0.875)" d="M1 0 L3 0 L4 1 L4 3 L3 4 L1 4 L0 5 L0 7 L1 8 L3 8 L4 7 L4 5 L3 4 L1 4 L0 3 L0 1 Z"/><path vector-effect="non-scaling-stroke" transform="translate(5.78 0) scale(0.629 0.875)" d="M0.6 0 L3.4 0 L4 1 L4 7 L3.4 8 L0.6 8 L0 7 L0 1 Z"/></g><g fill="none" stroke="#ffffff" stroke-width="1" stroke-linejoin="round" transform="translate(868.5 236.8) rotate(-90) translate(0 -3)"><path vector-effect="non-scaling-stroke" transform="translate(0.00 0) scale(0.777 0.375)" d="M2 1.5 L2 6.5 M0 4 L4 4"/><path vector-effect="non-scaling-stroke" transform="translate(4.19 0) scale(0.777 0.375)" d="M0.6 0 L3.4 0 L4 1 L4 7 L3.4 8 L0.6 8 L0 7 L0 1 Z"/></g><g fill="none" stroke="#ffffff" stroke-width="1" stroke-linejoin="round" transform="translate(873.5 235.8) rotate(-90) translate(0 -3)"><path vector-effect="non-scaling-stroke" transform="translate(0.00 0) scale(1.325 0.375)" d="M0.6 0 L3.4 0 L4 1 L4 7 L3.4 8 L0.6 8 L0 7 L0 1 Z"/></g><g fill="none" stroke="#ffffff" stroke-width="1" stroke-linejoin="round" transform="translate(855.5 290.8) rotate(-90) translate(0 -7)"><path vector-effect="non-scaling-stroke" transform="translate(-0.57 0) scale(0.716 0.875)" d="M1 1.2 L2 0 L2 8"/><path vector-effect="non-scaling-stroke" transform="translate(2.15 0) scale(0.716 0.875)" d="M1 1.2 L2 0 L2 8"/><path vector-effect="non-scaling-stroke" transform="translate(5.44 0) scale(0.716 0.875)" d="M0.6 0 L3.4 0 L4 1 L4 7 L3.4 8 L0.6 8 L0 7 L0 1 Z"/></g><g fill="none" stroke="#ffffff" stroke-width="1" stroke-linejoin="round" transform="translate(849.5 281.8) rotate(-90) translate(0 -3)"><path vector-effect="non-scaling-stroke" transform="translate(0.00 0) scale(0.777 0.375)" d="M2 1.5 L2 6.5 M0 4 L4 4"/><path vector-effect="non-scaling-stroke" transform="translate(4.19 0) scale(0.777 0.375)" d="M0.6 0 L3.4 0 L4 1 L4 7 L3.4 8 L0.6 8 L0 7 L0 1 Z"/></g><g fill="none" stroke="#ffffff" stroke-width="1" stroke-linejoin="round" transform="translate(854.5 280.8) rotate(-90) translate(0 -3)"><path vector-effect="non-scaling-stroke" transform="translate(0.00 0) scale(1.325 0.375)" d="M0.6 0 L3.4 0 L4 1 L4 7 L3.4 8 L0.6 8 L0 7 L0 1 Z"/></g><rect x="851" y="348" width="12" height="1" fill="#ffffff"/><rect x="851" y="359" width="12" height="1" fill="#ffffff"/><rect x="851" y="348" width="1" height="12" fill="#ffffff"/><rect x="862" y="348" width="1" height="12" fill="#ffffff"/><g fill="none" stroke="#ffffff" stroke-width="1" stroke-linejoin="round" transform="translate(855.5 351.5)"><path vector-effect="non-scaling-stroke" transform="translate(0.00 0) scale(0.575 0.625)" d="M0 8 L0 3 L2 0 L4 3 L4 8 M0 5.5 L4 5.5"/></g><rect x="851" y="339" width="13" height="1" fill="#ffffff"/><rect x="624" y="285" width="1" height="17" fill="#ffffff"/><rect x="630" y="285" width="1" height="17" fill="#ffffff"/><rect x="658" y="285" width="1" height="17" fill="#ffffff"/><rect x="664" y="285" width="1" height="17" fill="#ffffff"/><rect x="589" y="288" width="47" height="1" fill="#ffffff"/><rect x="653" y="288" width="28" height="1" fill="#ffffff"/><g fill="none" stroke="#ffffff" stroke-width="1" stroke-linejoin="round" transform="translate(589.5 279.5)"><path vector-effect="non-scaling-stroke" transform="translate(0.00 0) scale(0.708 0.625)" d="M3 8 L3 0 L0 5.5 L4 5.5"/><path vector-effect="non-scaling-stroke" transform="translate(3.82 0) scale(0.708 0.625)" d="M0.5 3 L3.5 7 M3.5 3 L0.5 7"/><path vector-effect="non-scaling-stroke" transform="translate(7.65 0) scale(0.708 0.625)" d="M2 -0.5 L2 8.5 M2 2 L3.5 2.5 L4 4 L3.5 5.5 L2 6 L0.5 5.5 L0 4 L0.5 2.5 Z"/><path vector-effect="non-scaling-stroke" transform="translate(11.47 0) scale(0.708 0.625)" d="M3.5 0 L1.2 0 L0 1.5 L0 7 L1 8 L3 8 L4 7 L4 4.6 L3 3.6 L0 3.6"/></g><g fill="none" stroke="#ffffff" stroke-width="1" stroke-linejoin="round" transform="translate(599.5 276.5)"><path vector-effect="non-scaling-stroke" transform="translate(0.00 0) scale(0.487 0.500)" d="M2 1.5 L2 6.5 M0 4 L4 4"/><path vector-effect="non-scaling-stroke" transform="translate(2.63 0) scale(0.487 0.500)" d="M0.6 0 L3.4 0 L4 1 L4 7 L3.4 8 L0.6 8 L0 7 L0 1 Z"/><path vector-effect="non-scaling-stroke" transform="translate(4.68 0) scale(0.487 0.500)" d="M1.6 7.2 L2.2 7.2 L2.2 8 L1.6 8 Z"/><path vector-effect="non-scaling-stroke" transform="translate(6.72 0) scale(0.487 0.500)" d="M0.6 0 L3.4 0 L4 1 L4 7 L3.4 8 L0.6 8 L0 7 L0 1 Z"/><path vector-effect="non-scaling-stroke" transform="translate(9.35 0) scale(0.487 0.500)" d="M1 0 L3 0 L4 1 L4 3 L3 4 L1 4 L0 5 L0 7 L1 8 L3 8 L4 7 L4 5 L3 4 L1 4 L0 3 L0 1 Z"/></g><g fill="none" stroke="#ffffff" stroke-width="1" stroke-linejoin="round" transform="translate(669.5 280.5)"><path vector-effect="non-scaling-stroke" transform="translate(0.00 0) scale(0.708 0.625)" d="M3 8 L3 0 L0 5.5 L4 5.5"/><path vector-effect="non-scaling-stroke" transform="translate(3.82 0) scale(0.708 0.625)" d="M0.5 3 L3.5 7 M3.5 3 L0.5 7"/><path vector-effect="non-scaling-stroke" transform="translate(7.65 0) scale(0.708 0.625)" d="M0 8 L0 0 L2 5 L4 0 L4 8"/><path vector-effect="non-scaling-stroke" transform="translate(11.47 0) scale(0.708 0.625)" d="M3.5 0 L1.2 0 L0 1.5 L0 7 L1 8 L3 8 L4 7 L4 4.6 L3 3.6 L0 3.6"/></g><path d="M622.50 280.50 L633.50 280.50" fill="none" stroke="#ffffff" stroke-width="1" /><path d="M622.50 280.50 L627.50 288.50 L637.50 271.50 L662.50 271.50" fill="none" stroke="#ffffff" stroke-width="1" /><g fill="none" stroke="#ffffff" stroke-width="1" stroke-linejoin="round" transform="translate(645.5 273.5)"><path vector-effect="non-scaling-stroke" transform="translate(0.00 0) scale(0.662 0.500)" d="M0 8 L0 0 L3 0 L4 1 L4 3 L3 4 L0 4 M2 4 L4 8"/><path vector-effect="non-scaling-stroke" transform="translate(3.57 0) scale(0.662 0.500)" d="M0.5 3 L3 3 L4 4 L4 8 L1 8 L0 7 L0 6 L1 5 L4 5"/><path vector-effect="non-scaling-stroke" transform="translate(6.62 0) scale(0.662 0.500)" d="M1 1.2 L2 0 L2 8"/><path vector-effect="non-scaling-stroke" transform="translate(8.87 0) scale(0.662 0.500)" d="M1.6 7.2 L2.2 7.2 L2.2 8 L1.6 8 Z"/><path vector-effect="non-scaling-stroke" transform="translate(11.65 0) scale(0.662 0.500)" d="M3.5 0 L1.2 0 L0 1.5 L0 7 L1 8 L3 8 L4 7 L4 4.6 L3 3.6 L0 3.6"/></g><rect x="162" y="397" width="338" height="1" fill="#ffffff"/><rect x="162" y="621" width="338" height="1" fill="#ffffff"/><rect x="162" y="397" width="1" height="225" fill="#ffffff"/><rect x="499" y="397" width="1" height="225" fill="#ffffff"/><rect x="252" y="397" width="1" height="225" fill="#ffffff"/><rect x="286" y="397" width="1" height="225" fill="#ffffff"/><rect x="148" y="425" width="105" height="1" fill="#ffffff"/><rect x="148" y="593" width="105" height="1" fill="#ffffff"/><rect x="286" y="464" width="4" height="1" fill="#ffffff"/><rect x="286" y="554" width="4" height="1" fill="#ffffff"/><rect x="286" y="464" width="1" height="91" fill="#ffffff"/><rect x="289" y="464" width="1" height="91" fill="#ffffff"/><rect x="331" y="397" width="68" height="1" fill="#ffffff"/><rect x="331" y="453" width="68" height="1" fill="#ffffff"/><rect x="331" y="397" width="1" height="57" fill="#ffffff"/><rect x="398" y="397" width="1" height="57" fill="#ffffff"/><rect x="331" y="566" width="68" height="1" fill="#ffffff"/><rect x="331" y="621" width="68" height="1" fill="#ffffff"/><rect x="331" y="566" width="1" height="56" fill="#ffffff"/><rect x="398" y="566" width="1" height="56" fill="#ffffff"/><rect x="331" y="385" width="1" height="13" fill="#ffffff"/><rect x="398" y="385" width="1" height="13" fill="#ffffff"/><rect x="331" y="453" width="1" height="18" fill="#ffffff"/><rect x="342" y="453" width="1" height="18" fill="#ffffff"/><rect x="387" y="453" width="1" height="18" fill="#ffffff"/><rect x="162" y="385" width="1" height="13" fill="#ffffff"/><rect x="252" y="385" width="1" height="13" fill="#ffffff"/><rect x="286" y="385" width="1" height="13" fill="#ffffff"/><rect x="162" y="387" width="237" height="1" fill="#ffffff"/><g fill="none" stroke="#ffffff" stroke-width="1" stroke-linejoin="round" transform="translate(205.5 379.5)"><path vector-effect="non-scaling-stroke" transform="translate(0.00 0) scale(0.564 0.625)" d="M1 0 L3 0 L4 1 L4 3 L3 4 L1 4 L0 5 L0 7 L1 8 L3 8 L4 7 L4 5 L3 4 L1 4 L0 3 L0 1 Z"/><path vector-effect="non-scaling-stroke" transform="translate(3.04 0) scale(0.564 0.625)" d="M0.6 0 L3.4 0 L4 1 L4 7 L3.4 8 L0.6 8 L0 7 L0 1 Z"/></g><g fill="none" stroke="#ffffff" stroke-width="1" stroke-linejoin="round" transform="translate(266.5 379.5)"><path vector-effect="non-scaling-stroke" transform="translate(0.00 0) scale(0.670 0.625)" d="M0 0 L4 0 L2 3.5 L3 3.5 L4 4.5 L4 7 L3 8 L1 8 L0 7"/><path vector-effect="non-scaling-stroke" transform="translate(3.62 0) scale(0.670 0.625)" d="M0.6 0 L3.4 0 L4 1 L4 7 L3.4 8 L0.6 8 L0 7 L0 1 Z"/></g><g fill="none" stroke="#ffffff" stroke-width="1" stroke-linejoin="round" transform="translate(306.5 379.5)"><path vector-effect="non-scaling-stroke" transform="translate(0.00 0) scale(0.564 0.625)" d="M3 8 L3 0 L0 5.5 L4 5.5"/><path vector-effect="non-scaling-stroke" transform="translate(3.04 0) scale(0.564 0.625)" d="M0.6 0 L3.4 0 L4 1 L4 7 L3.4 8 L0.6 8 L0 7 L0 1 Z"/></g><g fill="none" stroke="#ffffff" stroke-width="1" stroke-linejoin="round" transform="translate(362.5 379.5)"><path vector-effect="non-scaling-stroke" transform="translate(0.00 0) scale(0.564 0.625)" d="M3.5 0 L1.2 0 L0 1.5 L0 7 L1 8 L3 8 L4 7 L4 4.6 L3 3.6 L0 3.6"/><path vector-effect="non-scaling-stroke" transform="translate(3.04 0) scale(0.564 0.625)" d="M0.6 0 L3.4 0 L4 1 L4 7 L3.4 8 L0.6 8 L0 7 L0 1 Z"/></g><rect x="150" y="397" width="1" height="29" fill="#ffffff"/><rect x="150" y="593" width="1" height="29" fill="#ffffff"/><rect x="148" y="397" width="15" height="1" fill="#ffffff"/><rect x="148" y="621" width="15" height="1" fill="#ffffff"/><g fill="none" stroke="#ffffff" stroke-width="1" stroke-linejoin="round" transform="translate(142.5 407.5)"><path vector-effect="non-scaling-stroke" transform="translate(-0.54 0) scale(0.679 0.750)" d="M1 1.2 L2 0 L2 8"/><path vector-effect="non-scaling-stroke" transform="translate(2.58 0) scale(0.679 0.750)" d="M0 0 L4 0 L2 3.5 L3 3.5 L4 4.5 L4 7 L3 8 L1 8 L0 7"/></g><g fill="none" stroke="#ffffff" stroke-width="1" stroke-linejoin="round" transform="translate(142.5 603.5)"><path vector-effect="non-scaling-stroke" transform="translate(-0.54 0) scale(0.679 0.875)" d="M1 1.2 L2 0 L2 8"/><path vector-effect="non-scaling-stroke" transform="translate(2.58 0) scale(0.679 0.875)" d="M0 0 L4 0 L2 3.5 L3 3.5 L4 4.5 L4 7 L3 8 L1 8 L0 7"/></g><rect x="499" y="397" width="22" height="1" fill="#ffffff"/><rect x="499" y="621" width="22" height="1" fill="#ffffff"/><rect x="517" y="397" width="1" height="225" fill="#ffffff"/><rect x="158" y="509" width="29" height="1" fill="#ff0000"/><rect x="189" y="509" width="5" height="1" fill="#ff0000"/><rect x="195" y="509" width="30" height="1" fill="#ff0000"/><rect x="248" y="509" width="38" height="1" fill="#ff0000"/><rect x="288" y="509" width="6" height="1" fill="#ff0000"/><rect x="295" y="509" width="36" height="1" fill="#ff0000"/><rect x="332" y="509" width="5" height="1" fill="#ff0000"/><rect x="339" y="509" width="35" height="1" fill="#ff0000"/><rect x="376" y="509" width="5" height="1" fill="#ff0000"/><rect x="382" y="509" width="36" height="1" fill="#ff0000"/><rect x="419" y="509" width="6" height="1" fill="#ff0000"/><rect x="426" y="509" width="36" height="1" fill="#ff0000"/><rect x="463" y="509" width="5" height="1" fill="#ff0000"/><rect x="470" y="509" width="38" height="1" fill="#ff0000"/><rect x="269" y="451" width="1" height="39" fill="#ff0000"/><rect x="269" y="492" width="1" height="4" fill="#ff0000"/><rect x="269" y="497" width="1" height="29" fill="#ff0000"/><rect x="269" y="528" width="1" height="3" fill="#ff0000"/><rect x="269" y="532" width="1" height="38" fill="#ff0000"/><path d="M267 454.5h5M266 455.5h2M271 455.5h2M265 456.5h2M272 456.5h2M265 457.5h1M273 457.5h1M265 458.5h1M273 458.5h1M265 459.5h1M273 459.5h1M265 460.5h2M272 460.5h2M266 461.5h2M271 461.5h2M267 462.5h5" stroke="#ffffff" stroke-width="1" fill="none"/><rect x="265" y="458" width="10" height="1" fill="#ff0000"/><path d="M267 477.5h5M266 478.5h2M271 478.5h2M265 479.5h2M272 479.5h2M265 480.5h1M273 480.5h1M265 481.5h1M273 481.5h1M265 482.5h1M273 482.5h1M265 483.5h2M272 483.5h2M266 484.5h2M271 484.5h2M267 485.5h5" stroke="#ffffff" stroke-width="1" fill="none"/><rect x="265" y="481" width="10" height="1" fill="#ff0000"/><path d="M267 533.5h5M266 534.5h2M271 534.5h2M265 535.5h2M272 535.5h2M265 536.5h1M273 536.5h1M265 537.5h1M273 537.5h1M265 538.5h1M273 538.5h1M265 539.5h2M272 539.5h2M266 540.5h2M271 540.5h2M267 541.5h5" stroke="#ffffff" stroke-width="1" fill="none"/><rect x="265" y="537" width="10" height="1" fill="#ff0000"/><path d="M267 555.5h5M266 556.5h2M271 556.5h2M265 557.5h2M272 557.5h2M265 558.5h1M273 558.5h1M265 559.5h1M273 559.5h1M265 560.5h1M273 560.5h1M265 561.5h2M272 561.5h2M266 562.5h2M271 562.5h2M267 563.5h5" stroke="#ffffff" stroke-width="1" fill="none"/><rect x="265" y="559" width="10" height="1" fill="#ff0000"/><rect x="252" y="444" width="18" height="1" fill="#ffffff"/><rect x="269" y="440" width="1" height="12" fill="#ffffff"/><g fill="none" stroke="#ffffff" stroke-width="1" stroke-linejoin="round" transform="translate(258.5 435.5)"><path vector-effect="non-scaling-stroke" transform="translate(-0.54 0) scale(0.679 0.750)" d="M1 1.2 L2 0 L2 8"/><path vector-effect="non-scaling-stroke" transform="translate(2.58 0) scale(0.679 0.750)" d="M4 0 L0.3 0 L0 3.6 L3 3.6 L4 4.6 L4 7 L3 8 L0 8"/></g><rect x="234" y="458" width="1" height="102" fill="#ffffff"/><rect x="232" y="458" width="34" height="1" fill="#ffffff"/><rect x="232" y="559" width="34" height="1" fill="#ffffff"/><rect x="245" y="481" width="1" height="57" fill="#ffffff"/><rect x="243" y="481" width="23" height="1" fill="#ffffff"/><rect x="243" y="537" width="23" height="1" fill="#ffffff"/><rect x="224" y="503" width="21" height="13" fill="#000"/><rect x="234" y="458" width="1" height="102" fill="#ffffff"/><rect x="245" y="481" width="1" height="57" fill="#ffffff"/><g fill="none" stroke="#ffffff" stroke-width="1" stroke-linejoin="round" transform="translate(231.5 511.8) rotate(-90) translate(0 -6)"><path vector-effect="non-scaling-stroke" transform="translate(0.00 0) scale(0.564 0.750)" d="M4 4.4 L1 4.4 L0 3.4 L0 1 L1 0 L3 0 L4 1 L4 6.5 L2.8 8 L0.5 8"/><path vector-effect="non-scaling-stroke" transform="translate(3.04 0) scale(0.564 0.750)" d="M0.6 0 L3.4 0 L4 1 L4 7 L3.4 8 L0.6 8 L0 7 L0 1 Z"/></g><g fill="none" stroke="#ffffff" stroke-width="1" stroke-linejoin="round" transform="translate(242.5 511.8) rotate(-90) translate(0 -6)"><path vector-effect="non-scaling-stroke" transform="translate(0.00 0) scale(0.564 0.750)" d="M4 0 L0.3 0 L0 3.6 L3 3.6 L4 4.6 L4 7 L3 8 L0 8"/><path vector-effect="non-scaling-stroke" transform="translate(3.04 0) scale(0.564 0.750)" d="M0.6 0 L3.4 0 L4 1 L4 7 L3.4 8 L0.6 8 L0 7 L0 1 Z"/></g><rect x="342" y="397" width="1" height="25" fill="#ff0000"/><rect x="342" y="423" width="1" height="5" fill="#ff0000"/><rect x="342" y="429" width="1" height="25" fill="#ff0000"/><rect x="342" y="566" width="1" height="25" fill="#ff0000"/><rect x="342" y="592" width="1" height="5" fill="#ff0000"/><rect x="342" y="598" width="1" height="24" fill="#ff0000"/><rect x="387" y="397" width="1" height="25" fill="#ff0000"/><rect x="387" y="423" width="1" height="5" fill="#ff0000"/><rect x="387" y="429" width="1" height="25" fill="#ff0000"/><rect x="387" y="566" width="1" height="25" fill="#ff0000"/><rect x="387" y="592" width="1" height="5" fill="#ff0000"/><rect x="387" y="598" width="1" height="24" fill="#ff0000"/><rect x="310" y="397" width="1" height="57" fill="#ffffff"/><rect x="307" y="453" width="25" height="1" fill="#ffffff"/><rect x="321" y="397" width="1" height="46" fill="#ffffff"/><rect x="319" y="408" width="21" height="1" fill="#ffffff"/><rect x="319" y="442" width="21" height="1" fill="#ffffff"/><g fill="none" stroke="#ffffff" stroke-width="1" stroke-linejoin="round" transform="translate(307.5 427.8) rotate(-90) translate(0 -6)"><path vector-effect="non-scaling-stroke" transform="translate(0.00 0) scale(0.564 0.750)" d="M4 0 L0.3 0 L0 3.6 L3 3.6 L4 4.6 L4 7 L3 8 L0 8"/><path vector-effect="non-scaling-stroke" transform="translate(3.04 0) scale(0.564 0.750)" d="M0.6 0 L3.4 0 L4 1 L4 7 L3.4 8 L0.6 8 L0 7 L0 1 Z"/></g><g fill="none" stroke="#ffffff" stroke-width="1" stroke-linejoin="round" transform="translate(319.5 427.8) rotate(-90) translate(0 -6)"><path vector-effect="non-scaling-stroke" transform="translate(0.00 0) scale(0.564 0.750)" d="M0 0 L4 0 L2 3.5 L3 3.5 L4 4.5 L4 7 L3 8 L1 8 L0 7"/><path vector-effect="non-scaling-stroke" transform="translate(3.04 0) scale(0.564 0.750)" d="M0.6 0 L3.4 0 L4 1 L4 7 L3.4 8 L0.6 8 L0 7 L0 1 Z"/></g><g fill="none" stroke="#ffffff" stroke-width="1" stroke-linejoin="round" transform="translate(319.5 405.8) rotate(-90) translate(0 -6)"><path vector-effect="non-scaling-stroke" transform="translate(-0.55 0) scale(0.694 0.750)" d="M1 1.2 L2 0 L2 8"/><path vector-effect="non-scaling-stroke" transform="translate(2.08 0) scale(0.694 0.750)" d="M1 1.2 L2 0 L2 8"/></g><rect x="331" y="465" width="57" height="1" fill="#ffffff"/><g fill="none" stroke="#ffffff" stroke-width="1" stroke-linejoin="round" transform="translate(338.5 462.8) rotate(-90) translate(0 -4)"><path vector-effect="non-scaling-stroke" transform="translate(-0.54 0) scale(0.679 0.500)" d="M1 1.2 L2 0 L2 8"/><path vector-effect="non-scaling-stroke" transform="translate(2.58 0) scale(0.679 0.500)" d="M4 0 L0.3 0 L0 3.6 L3 3.6 L4 4.6 L4 7 L3 8 L0 8"/></g><g fill="none" stroke="#ffffff" stroke-width="1" stroke-linejoin="round" transform="translate(362.5 457.5)"><path vector-effect="non-scaling-stroke" transform="translate(0.00 0) scale(0.564 0.625)" d="M3 8 L3 0 L0 5.5 L4 5.5"/><path vector-effect="non-scaling-stroke" transform="translate(3.04 0) scale(0.564 0.625)" d="M0.6 0 L3.4 0 L4 1 L4 7 L3.4 8 L0.6 8 L0 7 L0 1 Z"/></g><rect x="508" y="503" width="8" height="13" fill="#000"/><g fill="none" stroke="#ffffff" stroke-width="1" stroke-linejoin="round" transform="translate(514.5 513.8) rotate(-90) translate(0 -6)"><path vector-effect="non-scaling-stroke" transform="translate(0.00 0) scale(0.628 0.750)" d="M0 1 L1 0 L3 0 L4 1 L4 3 L0 8 L4 8"/><path vector-effect="non-scaling-stroke" transform="translate(3.39 0) scale(0.628 0.750)" d="M0.6 0 L3.4 0 L4 1 L4 7 L3.4 8 L0.6 8 L0 7 L0 1 Z"/><path vector-effect="non-scaling-stroke" transform="translate(6.79 0) scale(0.628 0.750)" d="M0.6 0 L3.4 0 L4 1 L4 7 L3.4 8 L0.6 8 L0 7 L0 1 Z"/></g><path d="M341 405.5h4M340 406.5h1M345 406.5h1M339 407.5h1M346 407.5h1M339 408.5h1M346 408.5h1M339 409.5h1M346 409.5h1M339 410.5h1M346 410.5h1M340 411.5h1M345 411.5h1M341 412.5h4" stroke="#ffffff" stroke-width="1" fill="none"/><rect x="339" y="408" width="8" height="1" fill="#ff0000"/><rect x="342" y="405" width="1" height="8" fill="#ff0000"/><path d="M341 439.5h4M340 440.5h1M345 440.5h1M339 441.5h1M346 441.5h1M339 442.5h1M346 442.5h1M339 443.5h1M346 443.5h1M339 444.5h1M346 444.5h1M340 445.5h1M345 445.5h1M341 446.5h4" stroke="#ffffff" stroke-width="1" fill="none"/><rect x="339" y="442" width="8" height="1" fill="#ff0000"/><rect x="342" y="439" width="1" height="8" fill="#ff0000"/><path d="M341 574.5h4M340 575.5h1M345 575.5h1M339 576.5h1M346 576.5h1M339 577.5h1M346 577.5h1M339 578.5h1M346 578.5h1M339 579.5h1M346 579.5h1M340 580.5h1M345 580.5h1M341 581.5h4" stroke="#ffffff" stroke-width="1" fill="none"/><rect x="339" y="577" width="8" height="1" fill="#ff0000"/><rect x="342" y="574" width="1" height="8" fill="#ff0000"/><path d="M341 607.5h4M340 608.5h1M345 608.5h1M339 609.5h1M346 609.5h1M339 610.5h1M346 610.5h1M339 611.5h1M346 611.5h1M339 612.5h1M346 612.5h1M340 613.5h1M345 613.5h1M341 614.5h4" stroke="#ffffff" stroke-width="1" fill="none"/><rect x="339" y="610" width="8" height="1" fill="#ff0000"/><rect x="342" y="607" width="1" height="8" fill="#ff0000"/><path d="M386 405.5h4M385 406.5h1M390 406.5h1M384 407.5h1M391 407.5h1M384 408.5h1M391 408.5h1M384 409.5h1M391 409.5h1M384 410.5h1M391 410.5h1M385 411.5h1M390 411.5h1M386 412.5h4" stroke="#ffffff" stroke-width="1" fill="none"/><rect x="384" y="408" width="8" height="1" fill="#ff0000"/><rect x="387" y="405" width="1" height="8" fill="#ff0000"/><path d="M386 439.5h4M385 440.5h1M390 440.5h1M384 441.5h1M391 441.5h1M384 442.5h1M391 442.5h1M384 443.5h1M391 443.5h1M384 444.5h1M391 444.5h1M385 445.5h1M390 445.5h1M386 446.5h4" stroke="#ffffff" stroke-width="1" fill="none"/><rect x="384" y="442" width="8" height="1" fill="#ff0000"/><rect x="387" y="439" width="1" height="8" fill="#ff0000"/><path d="M386 574.5h4M385 575.5h1M390 575.5h1M384 576.5h1M391 576.5h1M384 577.5h1M391 577.5h1M384 578.5h1M391 578.5h1M384 579.5h1M391 579.5h1M385 580.5h1M390 580.5h1M386 581.5h4" stroke="#ffffff" stroke-width="1" fill="none"/><rect x="384" y="577" width="8" height="1" fill="#ff0000"/><rect x="387" y="574" width="1" height="8" fill="#ff0000"/><path d="M386 607.5h4M385 608.5h1M390 608.5h1M384 609.5h1M391 609.5h1M384 610.5h1M391 610.5h1M384 611.5h1M391 611.5h1M384 612.5h1M391 612.5h1M385 613.5h1M390 613.5h1M386 614.5h4" stroke="#ffffff" stroke-width="1" fill="none"/><rect x="384" y="610" width="8" height="1" fill="#ff0000"/><rect x="387" y="607" width="1" height="8" fill="#ff0000"/><g fill="none" stroke="#ffffff" stroke-width="1" stroke-linejoin="round" transform="translate(128.5 502.5)"><path vector-effect="non-scaling-stroke" transform="translate(0.00 0) scale(0.575 0.750)" d="M0 8 L0 3 L2 0 L4 3 L4 8 M0 5.5 L4 5.5"/></g><rect x="134" y="503" width="1" height="7" fill="#ffffff"/><rect x="134" y="509" width="8" height="1" fill="#ffffff"/><g fill="none" stroke="#ffffff" stroke-width="1" stroke-linejoin="round" transform="translate(531.5 503.5)"><path vector-effect="non-scaling-stroke" transform="translate(0.00 0) scale(0.575 0.625)" d="M0 8 L0 3 L2 0 L4 3 L4 8 M0 5.5 L4 5.5"/></g><rect x="528" y="503" width="1" height="7" fill="#ffffff"/><rect x="522" y="509" width="7" height="1" fill="#ffffff"/><rect x="381" y="377" width="8" height="1" fill="#ffffff"/><rect x="388" y="377" width="1" height="7" fill="#ffffff"/><g fill="none" stroke="#ffffff" stroke-width="1" stroke-linejoin="round" transform="translate(389.5 375.5)"><path vector-effect="non-scaling-stroke" transform="translate(0.00 0) scale(0.575 0.500)" d="M-0.6 8 L3.2 8 L4 7 L4 5.2 L3.2 4.2 L4 3.2 L4 1 L3.2 0 L0 0 L0 8 M0 4.2 L3.2 4.2"/></g><rect x="381" y="634" width="8" height="1" fill="#ffffff"/><rect x="388" y="628" width="1" height="7" fill="#ffffff"/><g fill="none" stroke="#ffffff" stroke-width="1" stroke-linejoin="round" transform="translate(389.5 628.5)"><path vector-effect="non-scaling-stroke" transform="translate(0.00 0) scale(0.575 0.500)" d="M-0.6 8 L3.2 8 L4 7 L4 5.2 L3.2 4.2 L4 3.2 L4 1 L3.2 0 L0 0 L0 8 M0 4.2 L3.2 4.2"/></g><path d="M718 413.5h2M721 413.5h10M732 413.5h2M719 414.5h2M722 414.5h13M718 415.5h16M718 416.5h16M718 417.5h5M724 417.5h11M718 418.5h13M732 418.5h3M718 419.5h8M727 419.5h7M719 420.5h15M719 421.5h5M726 421.5h6M733 421.5h2" stroke="#fff" stroke-width="1" fill="none"/><g fill="none" stroke="#ffffff" stroke-width="1" stroke-linejoin="round" transform="translate(653.5 432.5)"><path vector-effect="non-scaling-stroke" transform="translate(-0.43 0) scale(0.542 0.750)" d="M1 1.2 L2 0 L2 8"/></g><rect x="656" y="438" width="1" height="2" fill="#ffffff"/><path d="M658 432.5h2M661 432.5h6M668 432.5h3M672 432.5h2M676 432.5h11M659 433.5h6M667 433.5h16M684 433.5h3M658 434.5h4M663 434.5h17M681 434.5h5M658 435.5h2M661 435.5h25M659 436.5h4M664 436.5h23M658 437.5h3M662 437.5h8M671 437.5h5M677 437.5h10M660 438.5h1M663 438.5h7M673 438.5h1M675 438.5h2M678 438.5h1M680 438.5h7" stroke="#fff" stroke-width="1" fill="none"/><g fill="none" stroke="#ffffff" stroke-width="1" stroke-linejoin="round" transform="translate(653.5 443.5)"><path vector-effect="non-scaling-stroke" transform="translate(0.00 0) scale(0.575 0.750)" d="M0 1 L1 0 L3 0 L4 1 L4 3 L0 8 L4 8"/></g><rect x="657" y="449" width="1" height="2" fill="#ffffff"/><path d="M659 443.5h7M667 443.5h7M675 443.5h1M677 443.5h4M682 443.5h2M685 443.5h2M689 443.5h9M699 443.5h6M708 443.5h2M659 444.5h47M708 444.5h2M659 445.5h29M689 445.5h3M693 445.5h17M659 446.5h50M659 447.5h6M666 447.5h37M704 447.5h6M659 448.5h51M659 449.5h5M668 449.5h2M671 449.5h2M674 449.5h6M684 449.5h2M687 449.5h5M695 449.5h2M699 449.5h10" stroke="#fff" stroke-width="1" fill="none"/><g fill="none" stroke="#ffffff" stroke-width="1" stroke-linejoin="round" transform="translate(653.5 454.5)"><path vector-effect="non-scaling-stroke" transform="translate(0.00 0) scale(0.575 0.625)" d="M0 0 L4 0 L2 3.5 L3 3.5 L4 4.5 L4 7 L3 8 L1 8 L0 7"/></g><rect x="657" y="459" width="1" height="2" fill="#ffffff"/><path d="M659 454.5h3M663 454.5h4M668 454.5h5M674 454.5h4M660 455.5h17M678 455.5h1M659 456.5h20M660 457.5h18M659 458.5h20M659 459.5h3M663 459.5h11M675 459.5h4M659 460.5h2M663 460.5h2M666 460.5h10M677 460.5h2" stroke="#fff" stroke-width="1" fill="none"/><path d="M680 454.5h1M682 454.5h1M684 454.5h2M687 454.5h4M692 454.5h2M695 454.5h1M680 455.5h12M693 455.5h1M695 455.5h1M680 456.5h16M681 457.5h15M680 458.5h16M680 459.5h8M689 459.5h7M680 460.5h2M683 460.5h3M687 460.5h1M689 460.5h3M694 460.5h1" stroke="#fff" stroke-width="1" fill="none"/><path d="M698 454.5h1M700 454.5h1M702 454.5h1M697 455.5h2M700 455.5h4M697 456.5h6M697 457.5h7M697 458.5h5M703 458.5h1M698 459.5h6M697 460.5h2M700 460.5h4" stroke="#fff" stroke-width="1" fill="none"/><path d="M705 454.5h12M718 454.5h1M721 454.5h1M724 454.5h8M733 454.5h3M737 454.5h2M705 455.5h36M705 456.5h35M706 457.5h13M720 457.5h21M705 458.5h36M706 459.5h35M705 460.5h2M708 460.5h2M711 460.5h3M715 460.5h4M720 460.5h1M722 460.5h1M724 460.5h1M726 460.5h3M730 460.5h1M732 460.5h1M734 460.5h2M737 460.5h4" stroke="#fff" stroke-width="1" fill="none"/><path d="M653 465.5h1M656 465.5h1M659 465.5h4M664 465.5h3M669 465.5h1M671 465.5h1M674 465.5h1M653 466.5h11M665 466.5h9M653 467.5h22M653 468.5h9M663 468.5h12M653 469.5h22M653 470.5h7M661 470.5h14M653 471.5h2M657 471.5h7M666 471.5h7" stroke="#fff" stroke-width="1" fill="none"/><g fill="none" stroke="#ffffff" stroke-width="1" stroke-linejoin="round" transform="translate(653.5 476.5)"><path vector-effect="non-scaling-stroke" transform="translate(0.00 0) scale(0.575 0.625)" d="M3 8 L3 0 L0 5.5 L4 5.5"/></g><rect x="657" y="481" width="1" height="2" fill="#ffffff"/><path d="M659 476.5h13M675 476.5h2M678 476.5h3M683 476.5h2M659 477.5h1M661 477.5h24M659 478.5h17M677 478.5h8M659 479.5h7M667 479.5h18M659 480.5h14M674 480.5h11M659 481.5h2M663 481.5h3M668 481.5h1M671 481.5h9M682 481.5h1" stroke="#fff" stroke-width="1" fill="none"/><g fill="none" stroke="#ffffff" stroke-width="1" stroke-linejoin="round" transform="translate(653.5 487.5)"><path vector-effect="non-scaling-stroke" transform="translate(0.00 0) scale(0.575 0.625)" d="M4 0 L0.3 0 L0 3.6 L3 3.6 L4 4.6 L4 7 L3 8 L0 8"/></g><rect x="657" y="492" width="1" height="2" fill="#ffffff"/><path d="M659 487.5h1M661 487.5h3M665 487.5h7M659 488.5h13M659 489.5h13M659 490.5h12M660 491.5h12M659 492.5h4M664 492.5h8" stroke="#fff" stroke-width="1" fill="none"/><path d="M753.50 526.50 L757.50 534.50 L767.50 518.50 L790.50 518.50" fill="none" stroke="#ffffff" stroke-width="1" /><circle cx="757.5" cy="528.5" r="2.8" fill="none" stroke="#ffffff" stroke-width="1" /><rect x="789" y="528" width="1" height="7" fill="#ffffff"/><path d="M795.50 526.50 L800.50 534.50 L809.50 518.50" fill="none" stroke="#ffffff" stroke-width="1" /><g fill="none" stroke="#ffffff" stroke-width="1.0" stroke-linejoin="round"><g style="vector-effect:non-scaling-stroke"><path vector-effect="non-scaling-stroke" transform="translate(809.00 528.24) scale(0.750 0.720)" d="M1 0 L3 2 L3 6 L1 8"/></g></g><rect x="730" y="598" width="203" height="1" fill="#ffffff"/><rect x="730" y="661" width="203" height="1" fill="#ffffff"/><rect x="730" y="598" width="1" height="64" fill="#ffffff"/><rect x="932" y="598" width="1" height="64" fill="#ffffff"/><rect x="730" y="606" width="90" height="1" fill="#ffffff"/><rect x="730" y="613" width="90" height="1" fill="#ffffff"/><rect x="730" y="621" width="90" height="1" fill="#ffffff"/><rect x="730" y="629" width="90" height="1" fill="#ffffff"/><rect x="730" y="637" width="90" height="1" fill="#ffffff"/><rect x="730" y="645" width="90" height="1" fill="#ffffff"/><rect x="730" y="653" width="90" height="1" fill="#ffffff"/><rect x="741" y="598" width="1" height="32" fill="#ffffff"/><rect x="752" y="598" width="1" height="32" fill="#ffffff"/><rect x="770" y="598" width="1" height="32" fill="#ffffff"/><rect x="743" y="629" width="1" height="33" fill="#ffffff"/><rect x="757" y="629" width="1" height="33" fill="#ffffff"/><rect x="775" y="629" width="1" height="33" fill="#ffffff"/><rect x="788" y="598" width="1" height="64" fill="#ffffff"/><rect x="801" y="598" width="1" height="64" fill="#ffffff"/><rect x="819" y="598" width="1" height="64" fill="#ffffff"/><rect x="875" y="598" width="1" height="64" fill="#ffffff"/><rect x="819" y="629" width="57" height="1" fill="#ffffff"/><rect x="819" y="640" width="114" height="1" fill="#ffffff"/><rect x="819" y="650" width="57" height="1" fill="#ffffff"/><rect x="875" y="618" width="58" height="1" fill="#ffffff"/><rect x="849" y="629" width="1" height="22" fill="#ffffff"/><rect x="862" y="629" width="1" height="22" fill="#ffffff"/><rect x="827" y="640" width="1" height="11" fill="#ffffff"/><rect x="834" y="640" width="1" height="11" fill="#ffffff"/><rect x="841" y="640" width="1" height="11" fill="#ffffff"/><g fill="none" stroke="#ffffff" stroke-width="1" stroke-linejoin="round" transform="translate(838.5 608.5)"><path vector-effect="non-scaling-stroke" transform="translate(0.00 0) scale(0.910 1.000)" d="M0 0 L0 8 M4 0 L4 8 M0 4 L4 4"/><path vector-effect="non-scaling-stroke" transform="translate(4.91 0) scale(0.910 1.000)" d="M0 0 L4 0 M2 0 L2 8"/><path vector-effect="non-scaling-stroke" transform="translate(9.83 0) scale(0.910 1.000)" d="M0 1 L1 0 L3 0 L4 1 L4 3 L0 8 L4 8"/><path vector-effect="non-scaling-stroke" transform="translate(14.74 0) scale(0.910 1.000)" d="M0.6 0 L3.4 0 L4 1 L4 7 L3.4 8 L0.6 8 L0 7 L0 1 Z"/><path vector-effect="non-scaling-stroke" transform="translate(19.66 0) scale(0.910 1.000)" d="M0.6 0 L3.4 0 L4 1 L4 7 L3.4 8 L0.6 8 L0 7 L0 1 Z"/></g><path d="M893 624.5h3M897 624.5h3M901 624.5h1M904 624.5h2M893 625.5h2M896 625.5h2M899 625.5h4M904 625.5h2M893 626.5h2M896 626.5h4M901 626.5h5M894 627.5h10M894 628.5h8M903 628.5h3M893 629.5h3M897 629.5h8M893 630.5h13M893 631.5h4M898 631.5h3M902 631.5h4M893 632.5h3M897 632.5h1M899 632.5h2M902 632.5h3" stroke="#fff" stroke-width="1" fill="none"/><g fill="none" stroke="#ffffff" stroke-width="1" stroke-linejoin="round" transform="translate(866.5 643.5)"><path vector-effect="non-scaling-stroke" transform="translate(0.00 0) scale(1.075 0.500)" d="M0.5 3 L3.5 8 M3.5 3 L0.5 8"/></g><rect x="164" y="350" width="3" height="1" fill="#ffffff"/><rect x="226" y="350" width="3" height="1" fill="#ffffff"/><rect x="164" y="362" width="3" height="1" fill="#ffffff"/><rect x="495" y="362" width="3" height="1" fill="#ffffff"/><rect x="433" y="350" width="3" height="1" fill="#ffffff"/><rect x="495" y="350" width="3" height="1" fill="#ffffff"/><rect x="516" y="306" width="1" height="3" fill="#ffffff"/><rect x="516" y="334" width="1" height="3" fill="#ffffff"/><rect x="307" y="216" width="1" height="3" fill="#ffffff"/><rect x="307" y="233" width="1" height="3" fill="#ffffff"/><rect x="164" y="388" width="3" height="1" fill="#ffffff"/><rect x="254" y="388" width="3" height="1" fill="#ffffff"/><rect x="248" y="388" width="3" height="1" fill="#ffffff"/><rect x="288" y="388" width="3" height="1" fill="#ffffff"/><rect x="282" y="388" width="3" height="1" fill="#ffffff"/><rect x="333" y="388" width="3" height="1" fill="#ffffff"/><rect x="327" y="388" width="3" height="1" fill="#ffffff"/><rect x="394" y="388" width="3" height="1" fill="#ffffff"/><rect x="151" y="399" width="1" height="3" fill="#ffffff"/><rect x="151" y="421" width="1" height="3" fill="#ffffff"/><rect x="151" y="595" width="1" height="3" fill="#ffffff"/><rect x="151" y="617" width="1" height="3" fill="#ffffff"/><rect x="516" y="399" width="1" height="3" fill="#ffffff"/><rect x="516" y="617" width="1" height="3" fill="#ffffff"/><rect x="254" y="443" width="3" height="1" fill="#ffffff"/><rect x="265" y="443" width="3" height="1" fill="#ffffff"/><rect x="235" y="460" width="1" height="3" fill="#ffffff"/><rect x="235" y="555" width="1" height="3" fill="#ffffff"/><rect x="246" y="483" width="1" height="3" fill="#ffffff"/><rect x="246" y="533" width="1" height="3" fill="#ffffff"/><rect x="309" y="399" width="1" height="3" fill="#ffffff"/><rect x="309" y="449" width="1" height="3" fill="#ffffff"/><rect x="321" y="399" width="1" height="3" fill="#ffffff"/><rect x="321" y="404" width="1" height="3" fill="#ffffff"/><rect x="321" y="410" width="1" height="3" fill="#ffffff"/><rect x="321" y="438" width="1" height="3" fill="#ffffff"/><rect x="333" y="466" width="3" height="1" fill="#ffffff"/><rect x="338" y="466" width="3" height="1" fill="#ffffff"/><rect x="344" y="466" width="3" height="1" fill="#ffffff"/><rect x="383" y="466" width="3" height="1" fill="#ffffff"/><rect x="875" y="138" width="1" height="3" fill="#ffffff"/><rect x="875" y="334" width="1" height="3" fill="#ffffff"/><rect x="856" y="227" width="1" height="3" fill="#ffffff"/><rect x="856" y="334" width="1" height="3" fill="#ffffff"/>
</svg></body></html>
